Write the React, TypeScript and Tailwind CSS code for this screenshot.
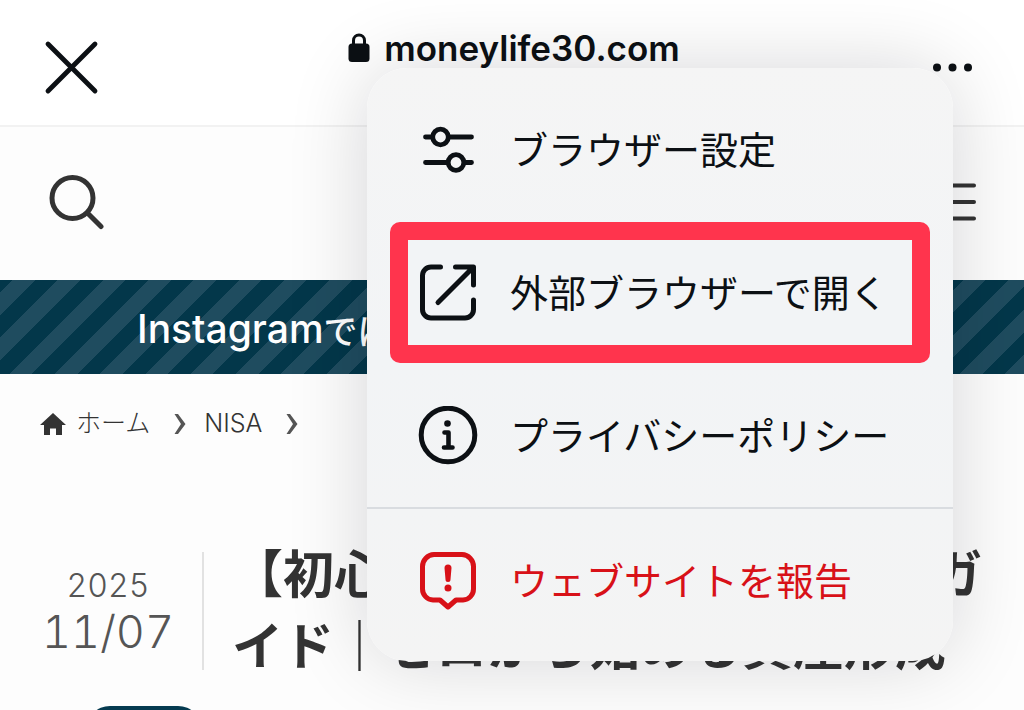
import type { ReactNode } from 'react';

const menuItems = [
  { id: 'settings', label: 'ブラウザー設定', icon: <SlidersIcon />, highlighted: false },
  { id: 'external', label: '外部ブラウザーで開く', icon: <ExternalIcon />, highlighted: true },
  { id: 'privacy', label: 'プライバシーポリシー', icon: <InfoIcon />, highlighted: false },
];

function CloseIcon() {
  return (
    <svg viewBox="0 0 56 56" className="w-14 h-14" fill="none" stroke="currentColor" strokeWidth="4.8" strokeLinecap="round">
      <path d="M4 5 51 52M51 5 4 52" />
    </svg>
  );
}

function LockIcon() {
  return (
    <svg viewBox="0 0 22 30" className="w-[22px] h-[30px]">
      <path d="M5.5 13V7.500a5.500 5.500 0 0 1 11 0V13" fill="none" stroke="currentColor" strokeWidth="3" />
      <rect x="0.5" y="10.500" width="21" height="18.500" rx="3.500" fill="currentColor" />
    </svg>
  );
}

function DotsIcon() {
  return (
    <svg viewBox="0 0 56 56" className="w-14 h-14" fill="currentColor">
      <circle cx="13" cy="28.500" r="4" />
      <circle cx="28.500" cy="28.500" r="4" />
      <circle cx="44" cy="28.500" r="4" />
    </svg>
  );
}

function SearchIcon() {
  return (
    <svg viewBox="0 0 56 56" className="w-14 h-14" fill="none" stroke="currentColor" strokeWidth="5" strokeLinecap="round">
      <circle cx="24.500" cy="24" r="20.500" />
      <path d="M40 39.500 53 52.500" />
    </svg>
  );
}

function HamburgerIcon() {
  return (
    <svg viewBox="0 0 40 40" className="w-10 h-10" fill="none" stroke="currentColor" strokeWidth="4" strokeLinecap="round">
      <path d="M2 3.500H38M2 20H38M2 36.500H38" />
    </svg>
  );
}

function HomeIcon() {
  return (
    <svg viewBox="0 0 26 24" className="w-[26px] h-6" fill="currentColor">
      <path d="M13 1 26 13H22V23H16V16.500H10V23H4V13H0Z" />
    </svg>
  );
}

function ChevronIcon() {
  return (
    <svg viewBox="0 0 12 22" className="w-3 h-[22px]" fill="currentColor">
      <path d="M0.500 1H4L11.500 11 4 21H0.500L7 11Z" />
    </svg>
  );
}

function SlidersIcon() {
  return (
    <svg viewBox="0 0 60 60" className="w-[60px] h-[60px]" fill="none" stroke="currentColor" strokeWidth="4.800" strokeLinecap="round">
      <path d="M7.500 17H14M32 17H53.500M7.500 42.500H29M47 42.500H53.500" />
      <circle cx="22.500" cy="17" r="7.800" />
      <circle cx="38" cy="42.500" r="7.800" />
    </svg>
  );
}

function ExternalIcon() {
  return (
    <svg viewBox="0 0 60 60" className="w-[60px] h-[60px]" fill="none" stroke="currentColor" strokeWidth="5" strokeLinecap="round" strokeLinejoin="round">
      <path d="M22.500 4H13A8.500 8.500 0 0 0 4.500 12.500V46.500A8.500 8.500 0 0 0 13 55H47A8.500 8.500 0 0 0 55.500 46.500V37" />
      <path d="M37.500 4H55.500V22M20 39.500 54.500 5" />
    </svg>
  );
}

function InfoIcon() {
  return (
    <svg viewBox="0 0 60 60" className="w-[60px] h-[60px]" fill="none" stroke="currentColor" strokeLinecap="round" strokeLinejoin="round">
      <circle cx="30" cy="29" r="26.800" strokeWidth="5" />
      <circle cx="29.500" cy="17.500" r="3.300" fill="currentColor" stroke="none" />
      <path d="M26.500 26.500H30.500V41M26 41.500H34.500" strokeWidth="4.600" />
    </svg>
  );
}

function ReportIcon() {
  return (
    <svg viewBox="0 0 60 60" className="w-[60px] h-[60px]" fill="none" stroke="currentColor" strokeWidth="5" strokeLinecap="round" strokeLinejoin="round">
      <path d="M16 3.500H44A12 12 0 0 1 55.500 15.500V38A11 11 0 0 1 45 49H38L30 56 22 49H15A11 11 0 0 1 4.500 38V15.500A12 12 0 0 1 16 3.500Z" />
      <path d="M26.500 17a3.500 3.500 0 0 1 7 0L32.500 28.500a2.500 2.500 0 0 1-5 0Z" fill="currentColor" stroke="none" />
      <circle cx="30" cy="37" r="3.500" fill="currentColor" stroke="none" />
    </svg>
  );
}

function MenuRow({ icon, label, highlighted = false }: { icon: ReactNode; label: string; highlighted?: boolean }) {
  return (
    <button type="button" role="menuitem" className="relative flex w-full h-[143px] items-center gap-8 pl-[51px] text-left text-[38px] leading-none">
      {icon}
      <span className="pb-1">{label}</span>
      {highlighted && (
        <span className="absolute inset-x-[23px] inset-y-px rounded-[10px] bg-[#ff344d] p-[18px] -z-10">
          <span className="block h-full bg-[#f2f4f6]" />
        </span>
      )}
    </button>
  );
}

function BrowserMenu() {
  return (
    <div
      role="menu"
      className="absolute isolate top-[68px] right-[71px] w-[586px] overflow-hidden rounded-[40px] bg-linear-to-b from-[#f5f5f5] via-[#f2f4f6] to-[#f4f4f4] pt-[10px] text-[#0c1014]"
    >
      {menuItems.map((item) => (
        <MenuRow key={item.id} icon={item.icon} label={item.label} highlighted={item.highlighted} />
      ))}
      <div className="border-t-2 border-[#d9dce0] pb-[9px] text-[#d81118]">
        <MenuRow icon={<ReportIcon />} label="ウェブサイトを報告" />
      </div>
    </div>
  );
}

export default function App() {
  return (
    <div className="relative h-screen overflow-hidden bg-[#fdfdfd] font-['Noto_Sans_CJK_JP',sans-serif] text-[#333]">
      <header className="grid h-[127px] grid-cols-[1fr_auto_1fr] items-center border-b-2 border-[#f2f2f2] bg-white px-11 pt-2 text-[#0c1014]">
        <button type="button" aria-label="閉じる" className="justify-self-start">
          <CloseIcon />
        </button>
        <div className="flex items-center gap-[14px] pb-[38px] pl-1 font-['Inter',sans-serif] text-[35px] leading-10 font-semibold">
          <LockIcon />
          <span>moneylife30.com</span>
        </div>
        <button type="button" aria-label="メニュー" className="justify-self-end">
          <DotsIcon />
        </button>
      </header>

      <div className="flex h-[153px] items-center justify-between px-12 pb-1">
        <button type="button" aria-label="検索">
          <SearchIcon />
        </button>
        <button type="button" aria-label="ナビゲーション">
          <HamburgerIcon />
        </button>
      </div>

      <a
        href="#instagram"
        className="flex h-[94px] items-center overflow-hidden whitespace-nowrap bg-[repeating-linear-gradient(135deg,#03374a_0px,#03374a_9px,#1f4c5f_9px,#1f4c5f_25px,#03374a_25px,#03374a_32px)] pt-1 pl-[137px] text-[34px] font-medium text-white"
      >
        <span className="font-['Inter',sans-serif] text-[39px]">Instagram</span>
        では投資情報を発信中
      </a>

      <nav aria-label="パンくず" className="flex h-[100px] items-center px-10 font-['Inter','Noto_Sans_CJK_JP',sans-serif] text-[25px] font-light text-[#333]">
        <a href="#home" className="flex items-center gap-[10px]">
          <HomeIcon />
          ホーム
        </a>
        <span className="pl-6 pr-[18px] text-[#555]">
          <ChevronIcon />
        </span>
        <a href="#nisa">NISA</a>
        <span className="pl-6 pr-[18px] text-[#555]">
          <ChevronIcon />
        </span>
      </nav>

      <main className="pt-[61px]">
        <div className="flex items-center">
          <time
            dateTime="2025-11-07"
            className="flex h-[118px] w-[204px] shrink-0 flex-col items-center justify-center border-r-2 border-[#e2e2e2] pb-1 pl-[14px] font-['Inter',sans-serif] font-light tabular-nums text-[#555]"
          >
            <span className="text-[32px] leading-[46px]">2025</span>
            <span className="text-[45px] leading-[46px]">11/07</span>
          </time>
          <h1 className="whitespace-nowrap pb-2 pl-7 text-[51px] leading-[72px] font-bold">
            【初心者向け】2025NISA完全ガ
            <br />
            イド｜ゼロから始める資産形成
          </h1>
        </div>
        <a href="#category" aria-label="カテゴリー" className="mt-[19px] ml-[86px] block h-12 w-[116px] rounded-full bg-[#053b50]" />
      </main>

      {/* glow around the menu */}
      <div className="pointer-events-none absolute top-[68px] right-[71px] h-[593px] w-[586px] rounded-[40px] shadow-[0_0_80px_rgba(0,0,20,0.16)]" />
      <BrowserMenu />
    </div>
  );
}
